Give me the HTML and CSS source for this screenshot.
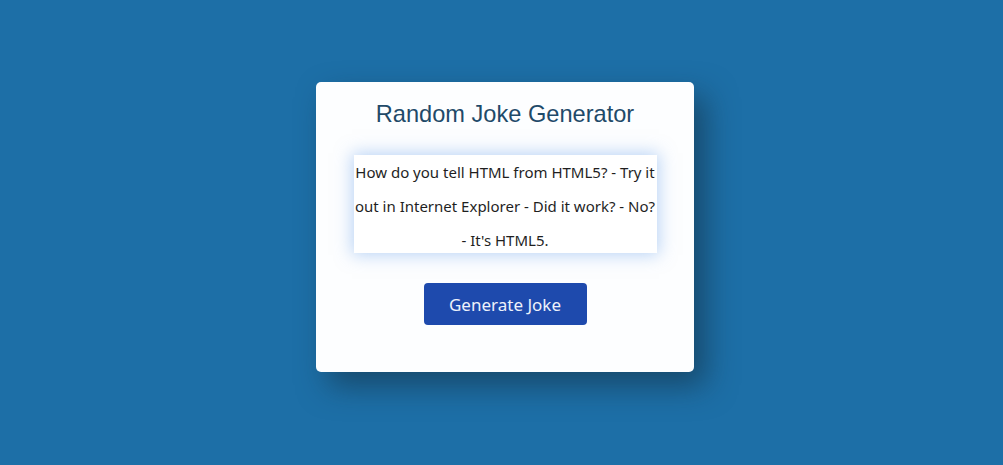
FILE: index.html
```html
<!DOCTYPE html>
<html lang="en">
<head>
<meta charset="utf-8">
<title>Random Joke Generator</title>
<link rel="stylesheet" href="styles.css">
</head>
<body>
<div class="page">
  <div class="card">
    <h1 class="title">Random Joke Generator</h1>
    <div class="joke">How do you tell HTML from HTML5? - Try it out in Internet Explorer - Did it work? - No? - It's HTML5.</div>
    <button class="btn">Generate Joke</button>
  </div>
</div>
</body>
</html>
```
FILE: styles.css
```css
html, body {
  margin: 0;
  height: 100%;
}
body {
  background: #1d6fa7;
  font-family: "Liberation Sans", Arial, sans-serif;
}
.page {
  display: flex;
  justify-content: center;
  padding: 82px 0 0 7px;
}
.card {
  width: 378px;
  height: 290px;
  box-sizing: border-box;
  background: #fdfeff;
  border-radius: 5px;
  box-shadow: 12px 14px 30px rgba(20, 50, 70, 0.6);
  display: flex;
  flex-direction: column;
  align-items: center;
  padding-top: 17px;
}
.title {
  margin: 0;
  font-weight: normal;
  font-size: 23.6px;
  line-height: 30px;
  color: #1f4a69;
}
.joke {
  margin-top: 26px;
  width: 303px;
  height: 98px;
  box-sizing: border-box;
  background: #ffffff;
  box-shadow: 0 0 16px 2px rgba(120, 170, 235, 0.5);
  font-family: "Noto Sans", sans-serif;
  font-size: 15px;
  line-height: 34px;
  color: #1f1f1f;
  text-align: center;
  padding-top: 0;
}
.btn {
  margin-top: 30px;
  width: 163px;
  height: 42px;
  border: none;
  border-radius: 4px;
  background: #1e4aad;
  color: #eef2fb;
  font-family: "Noto Sans", sans-serif;
  font-size: 17px;
}
```
